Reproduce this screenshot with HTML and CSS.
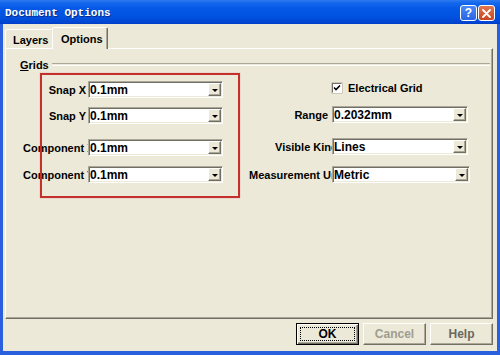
FILE: index.html
```html
<!DOCTYPE html>
<html lang="en">
<head>
  <meta charset="UTF-8">
  <title>Document Options</title>
  <link rel="stylesheet" href="styles.css">
</head>
<body>
  <!-- Dialog window frame -->
  <div class="window">
    <!-- Caption bar -->
    <div class="titlebar">
      <span class="title">Document Options</span>
      <div class="caption-buttons">
        <span class="cbtn help">?</span>
        <span class="cbtn close">
          <svg width="9" height="9" viewBox="0 0 9 9"><path d="M1 1 L8 8 M8 1 L1 8" stroke="#fff" stroke-width="1.8" stroke-linecap="round"/></svg>
        </span>
      </div>
    </div>

    <div class="client">
      <!-- Tab strip -->
      <div class="tabs">
        <div class="tab">Layers</div>
        <div class="tab active">Options</div>
      </div>

      <!-- Options page -->
      <div class="panel">
        <div class="group-head">
          <span class="legend"><u>G</u>rids</span>
          <span class="rule"></span>
        </div>

        <div class="fields">
          <div class="col left">
            <div class="row r1">
              <label class="lbl">Snap X</label>
              <div class="combo"><span class="value">0.1mm</span><span class="drop"></span></div>
            </div>
            <div class="row r2">
              <label class="lbl">Snap Y</label>
              <div class="combo"><span class="value">0.1mm</span><span class="drop"></span></div>
            </div>
            <div class="row r3">
              <label class="lbl clip comp">Component X</label>
              <div class="combo"><span class="value">0.1mm</span><span class="drop"></span></div>
            </div>
            <div class="row r4">
              <label class="lbl clip comp">Component Y</label>
              <div class="combo"><span class="value">0.1mm</span><span class="drop"></span></div>
            </div>
          </div>

          <div class="col right">
            <div class="row check-row">
              <span class="check">
                <svg width="8" height="8" viewBox="0 0 8 8"><path d="M1 3.5 L3 5.5 L7 1.5" fill="none" stroke="#000" stroke-width="1.6"/></svg>
              </span>
              <span class="check-text">Electrical Grid</span>
            </div>
            <div class="row q2">
              <label class="lbl">Range</label>
              <div class="combo"><span class="value">0.2032mm</span><span class="drop"></span></div>
            </div>
            <div class="row q3">
              <label class="lbl clip kind">Visible Kind</label>
              <div class="combo"><span class="value">Lines</span><span class="drop"></span></div>
            </div>
            <div class="row q4">
              <label class="lbl clip units">Measurement Unit</label>
              <div class="combo wide"><span class="value">Metric</span><span class="drop"></span></div>
            </div>
          </div>
        </div>

        <!-- Red annotation box drawn over the left fields -->
        <div class="highlight"></div>
      </div>

      <!-- Dialog buttons -->
      <div class="buttons">
        <button class="default">OK</button>
        <button class="faded">Cancel</button>
        <button class="faded dark">Help</button>
      </div>
    </div>
  </div>
</body>
</html>
```

FILE: styles.css
```css
/* Base */
body {
  margin: 0;
  font-family: "Liberation Sans", Arial, sans-serif;
  font-size: 11px;
  font-weight: bold;
  color: #000;
}

/* Window frame */
.window {
  width: 500px;
  height: 355px;
  display: flex;
  flex-direction: column;
  background-color: #2a5fde;
}

/* Caption bar */
.titlebar {
  height: 24px;
  flex-shrink: 0;
  display: flex;
  align-items: center;
  padding: 0 5px 0 5px;
  background: linear-gradient(#2e7bf0 0, #1467ec 3px, #0559e6 8px, #0052e0 16px, #0047d4 22px, #003dc4 24px);
}

.title {
  flex: 1;
  padding-top: 2px;
  font-family: "Liberation Mono", monospace;
  font-size: 11px;
  font-weight: bold;
  color: #fff;
  text-shadow: 1px 1px 0 #0a2a8a;
}

.caption-buttons {
  display: flex;
  gap: 1px;
  margin-top: 2px;
}

.cbtn {
  width: 17px;
  height: 16px;
  box-sizing: border-box;
  border: 1px solid #fff;
  border-radius: 3px;
  display: flex;
  align-items: center;
  justify-content: center;
  color: #fff;
  font-size: 12px;
}

.help {
  background: linear-gradient(#4b8af5, #2a63e6);
}

.close {
  background: linear-gradient(#e2774f, #c7451f);
}

/* Client area */
.client {
  flex: 1;
  margin: 0 3px 4px 3px;
  padding-top: 3px;
  background-color: #ece9d8;
  display: flex;
  flex-direction: column;
}

/* Tab strip */
.tabs {
  height: 21px;
  display: flex;
  align-items: flex-end;
  padding-left: 2px;
}

.tab {
  box-sizing: border-box;
  height: 19px;
  width: 49px;
  padding: 2px 0 0 7px;
  display: flex;
  align-items: center;
  border: 1px solid;
  border-bottom: none;
  border-color: #fff #716f64 transparent #fff;
  border-radius: 2px 2px 0 0;
  box-shadow: inset -1px 0 #aca899;
  background-color: #ece9d8;
}

.tab.active {
  position: relative;
  z-index: 1;
  height: 22px;
  width: 56px;
  padding: 0 0 0 8px;
  margin-left: -2px;
  margin-bottom: -1px;
}

/* Tab page */
.panel {
  flex: 1;
  position: relative;
  margin: 0 4px 0 2px;
  padding: 9px 2px 0 8px;
  border: 1px solid;
  border-color: #fff #716f64 #716f64 #fff;
  box-shadow: inset -1px -1px #aca899;
}

/* Group box header */
.group-head {
  display: flex;
  align-items: flex-start;
  height: 14px;
}

.legend {
  line-height: 14px;
  padding-left: 6px;
}

.rule {
  flex: 1;
  margin: 5px 0 0 3px;
  height: 1px;
  border-top: 1px solid #aca899;
  border-bottom: 1px solid #fff;
}

/* Field columns */
.fields {
  display: flex;
}

.col {
  display: flex;
  flex-direction: column;
}

.col.left {
  width: 209px;
}

.col.right {
  margin-left: 17px;
}

.row {
  height: 17px;
  display: flex;
  align-items: center;
}

.r1 { margin-top: 9px; }
.r2 { margin-top: 9px; }
.r3 { margin-top: 15px; }
.r4 { margin-top: 10px; }

.check-row { margin-top: 7px; }
.q2 { margin-top: 10px; }
.q3 { margin-top: 15px; }
.q4 { margin-top: 11px; }

/* Labels */
.lbl {
  flex: none;
  box-sizing: border-box;
  text-align: right;
  white-space: nowrap;
}

.left .lbl {
  width: 74px;
  padding-right: 2px;
}

.right .lbl {
  width: 92px;
  padding-right: 4px;
}

/* labels too long for their box: cut off at the combo edge */
.lbl.clip {
  overflow: hidden;
  text-align: left;
  padding-right: 0;
}

.left .lbl.comp { padding-left: 9px; }
.right .lbl.kind { padding-left: 35px; }
.right .lbl.units { padding-left: 9px; }

/* Combo boxes */
.combo {
  flex: none;
  box-sizing: border-box;
  width: 135px;
  height: 17px;
  display: flex;
  align-items: center;
  background-color: #fff;
  border: 1px solid;
  border-color: #aca899 #fff #fff #aca899;
  box-shadow: inset 1px 1px #716f64, inset -1px -1px #ece9d8;
}

.right .combo {
  width: 136px;
}

.right .combo.wide {
  width: 138px;
}

.value {
  flex: 1;
  padding: 1px 0 0 1px;
  font-size: 12px;
  line-height: 14px;
}

.drop {
  box-sizing: border-box;
  width: 13px;
  height: 13px;
  margin-right: 1px;
  display: flex;
  align-items: center;
  justify-content: center;
  background-color: #ece9d8;
  border: 1px solid;
  border-color: #fff #716f64 #716f64 #fff;
  box-shadow: inset -1px -1px #aca899;
}

.drop::after {
  content: "";
  border-left: 3px solid transparent;
  border-right: 3px solid transparent;
  border-top: 3px solid #000;
  margin-top: 1px;
}

/* Checkbox */
.check {
  box-sizing: border-box;
  width: 10px;
  height: 10px;
  margin-left: 92px;
  display: flex;
  align-items: center;
  justify-content: center;
  background-color: #fff;
  border: 1px solid;
  border-color: #716f64 #fff #fff #716f64;
  box-shadow: 0 0 0 0.5px #aca899;
}

.check-text {
  margin-left: 6px;
}

/* Red annotation */
.highlight {
  position: absolute;
  left: 34px;
  top: 24px;
  width: 200px;
  height: 125px;
  box-sizing: border-box;
  border: 2px solid #c4302b;
  box-shadow: 0 0 1px rgba(220, 80, 80, 0.6);
}

/* Dialog buttons */
.buttons {
  height: 32px;
  flex-shrink: 0;
  box-sizing: border-box;
  display: flex;
  justify-content: flex-end;
  align-items: flex-start;
  gap: 4px;
  padding: 4px 4px 0 0;
}

button {
  width: 63px;
  height: 22px;
  padding: 0;
  font-family: "Liberation Sans", Arial, sans-serif;
  font-size: 12px;
  font-weight: bold;
  color: #000;
  background-color: #ece9d8;
  border: 1px solid;
  border-color: #fff #716f64 #716f64 #fff;
  box-shadow: inset -1px -1px #aca899;
}

button.default {
  border-color: #000;
  box-shadow: inset 1px 1px #fff, inset -1px -1px #716f64, inset -2px -2px #aca899;
  outline: 1px dotted #000;
  outline-offset: -5px;
}

button.faded {
  color: #a09d90;
}

button.faded.dark {
  color: #6a685e;
}
```
